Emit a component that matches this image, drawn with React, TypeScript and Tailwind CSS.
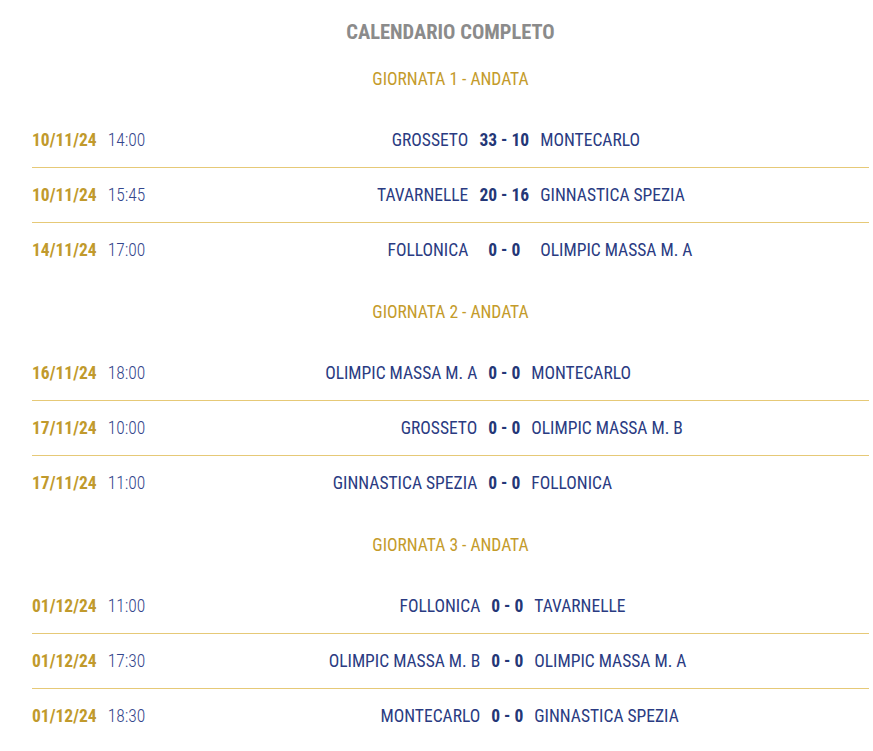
import React from 'react';

type Match = { date: string; time: string; home: string; score: string; away: string };

type Giornata = {
  title: string;
  homeClass: string;
  scoreClass: string;
  matches: Match[];
};

const giornate: Giornata[] = [
  {
    title: 'GIORNATA 1 - ANDATA',
    homeClass: 'w-[436px]',
    scoreClass: 'w-[72px]',
    matches: [
      { date: '10/11/24', time: '14:00', home: 'GROSSETO', score: '33 - 10', away: 'MONTECARLO' },
      { date: '10/11/24', time: '15:45', home: 'TAVARNELLE', score: '20 - 16', away: 'GINNASTICA SPEZIA' },
      { date: '14/11/24', time: '17:00', home: 'FOLLONICA', score: '0 - 0', away: 'OLIMPIC MASSA M. A' },
    ],
  },
  {
    title: 'GIORNATA 2 - ANDATA',
    homeClass: 'w-[445px]',
    scoreClass: 'w-[54px]',
    matches: [
      { date: '16/11/24', time: '18:00', home: 'OLIMPIC MASSA M. A', score: '0 - 0', away: 'MONTECARLO' },
      { date: '17/11/24', time: '10:00', home: 'GROSSETO', score: '0 - 0', away: 'OLIMPIC MASSA M. B' },
      { date: '17/11/24', time: '11:00', home: 'GINNASTICA SPEZIA', score: '0 - 0', away: 'FOLLONICA' },
    ],
  },
  {
    title: 'GIORNATA 3 - ANDATA',
    homeClass: 'w-[448px]',
    scoreClass: 'w-[54px]',
    matches: [
      { date: '01/12/24', time: '11:00', home: 'FOLLONICA', score: '0 - 0', away: 'TAVARNELLE' },
      { date: '01/12/24', time: '17:30', home: 'OLIMPIC MASSA M. B', score: '0 - 0', away: 'OLIMPIC MASSA M. A' },
      { date: '01/12/24', time: '18:30', home: 'MONTECARLO', score: '0 - 0', away: 'GINNASTICA SPEZIA' },
    ],
  },
];

function App() {
  return (
    <div className="min-h-screen bg-white font-['Roboto_Condensed',Roboto,sans-serif] pl-[32px] pr-[4px]">
      <h1 className="pt-[20px] h-[45px] text-center text-[20.5px] leading-[24px] font-bold text-[#8b8b8b]">
        CALENDARIO COMPLETO
      </h1>

      {giornate.map((g) => (
        <section key={g.title}>
          <h2 className="h-[68px] flex items-center justify-center text-[17.5px] text-[#c49b2b]">
            {g.title}
          </h2>
          <div>
            {g.matches.map((m, i) => (
              <div
                key={i}
                className="h-[55px] flex items-center border-b border-[#e6c977] last:border-b-0 text-[17.5px]"
              >
                <div className="flex items-center">
                  <span className="font-bold text-[#c19a2c]">{m.date}</span>
                  <span className="ml-[11px] font-light text-[#34468c]">{m.time}</span>
                </div>
                <div className={`${g.homeClass} -ml-[113px] text-right text-[#2a3b82] font-normal`}>
                  {m.home}
                </div>
                <div className={`${g.scoreClass} text-center font-bold text-[#243777]`}>{m.score}</div>
                <div className="flex-1 text-[#2a3b82]">{m.away}</div>
              </div>
            ))}
          </div>
        </section>
      ))}
    </div>
  );
}

export default App;
